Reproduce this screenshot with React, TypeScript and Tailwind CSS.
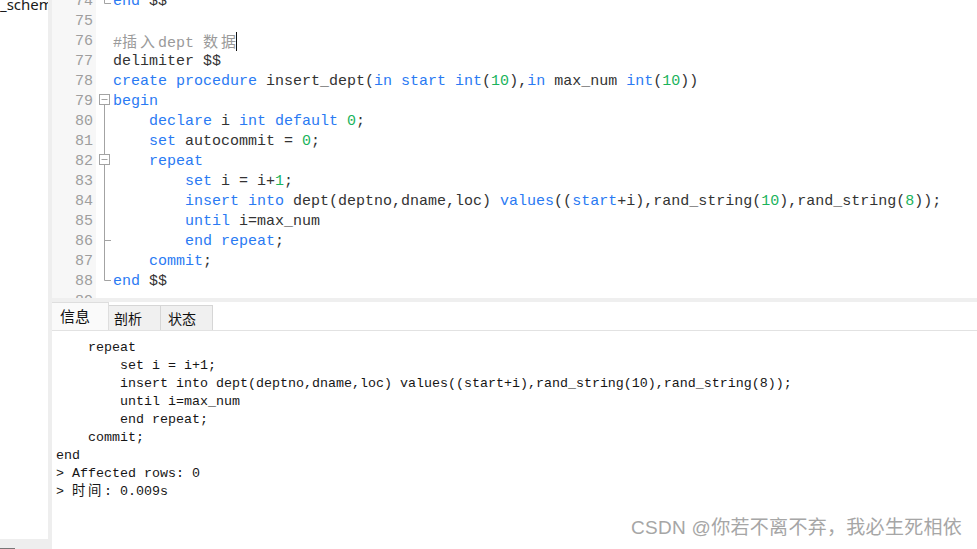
import React from "react";

type Seg = [string, "k" | "n" | "t" | "c"];

const K = (s: string): Seg => [s, "k"];
const N = (s: string): Seg => [s, "n"];
const T = (s: string): Seg => [s, "t"];

const lines: { no: number; segs: Seg[]; cursor?: boolean }[] = [
  { no: 74, segs: [K("end"), T(" $$")] },
  { no: 75, segs: [] },
  { no: 76, segs: [], cursor: true },
  { no: 77, segs: [T("delimiter $$")] },
  {
    no: 78,
    segs: [
      K("create procedure"),
      T(" insert_dept("),
      K("in start int"),
      T("("),
      N("10"),
      T("),"),
      K("in"),
      T(" max_num "),
      K("int"),
      T("("),
      N("10"),
      T("))"),
    ],
  },
  { no: 79, segs: [K("begin")] },
  { no: 80, segs: [T("    "), K("declare"), T(" i "), K("int default"), T(" "), N("0"), T(";")] },
  { no: 81, segs: [T("    "), K("set"), T(" autocommit = "), N("0"), T(";")] },
  { no: 82, segs: [T("    "), K("repeat")] },
  { no: 83, segs: [T("        "), K("set"), T(" i = i+"), N("1"), T(";")] },
  {
    no: 84,
    segs: [
      T("        "),
      K("insert into"),
      T(" dept(deptno,dname,loc) "),
      K("values"),
      T("(("),
      K("start"),
      T("+i),rand_string("),
      N("10"),
      T("),rand_string("),
      N("8"),
      T("));"),
    ],
  },
  { no: 85, segs: [T("        "), K("until"), T(" i=max_num")] },
  { no: 86, segs: [T("        "), K("end repeat"), T(";")] },
  { no: 87, segs: [T("    "), K("commit"), T(";")] },
  { no: 88, segs: [K("end"), T(" $$")] },
  { no: 89, segs: [] },
];

const colorOf: Record<string, string> = {
  k: "text-[#2a7af3]",
  n: "text-[#1bb35c]",
  t: "text-[#333333]",
  c: "text-[#9a9a9a]",
};

const mono = "font-['Liberation_Mono','Noto_Sans_CJK_SC',monospace]";

function FoldMarks() {
  const s = "#a3a3a3";
  return (
    <svg width="17" height="298" viewBox="96 0 17 298" className="absolute left-0 top-0">
      <path d={`M104.5 0 V3.5 H111`} stroke={s} fill="none" />
      <rect x="99.5" y="94.5" width="10" height="10" stroke={s} fill="#fff" />
      <path d="M101.5 99.5 H107.5" stroke={s} />
      <path d="M104.5 104.5 V154.5" stroke={s} />
      <rect x="99.5" y="154.5" width="10" height="10" stroke={s} fill="#fff" />
      <path d="M101.5 159.5 H107.5" stroke={s} />
      <path d="M104.5 164.5 V280.5 H111" stroke={s} fill="none" />
      <path d="M104.5 240.5 H111" stroke={s} />
    </svg>
  );
}

const outLines: React.ReactNode[] = [
  "    repeat",
  "        set i = i+1;",
  "        insert into dept(deptno,dname,loc) values((start+i),rand_string(10),rand_string(8));",
  "        until i=max_num",
  "        end repeat;",
  "    commit;",
  "end",
  "> Affected rows: 0",
  <>
    {"> "}
    <span className="tracking-[2.67px]">时间</span>
    {": 0.009s"}
  </>,
];

export default function App() {
  return (
    <div className="relative flex h-[549px] w-[977px] overflow-hidden bg-white">
      {/* left sidebar */}
      <div className="flex h-full w-[52px] shrink-0 flex-col bg-[#eeeeee]">
        <div className="h-[539px] w-[48px] overflow-hidden bg-white">
          <div className="mt-[-6px] whitespace-nowrap font-['Noto_Sans',sans-serif] text-[15px] leading-[20px] text-[#1a1a1a]">
            _schema
          </div>
        </div>
        <div className="flex-1" />
        <div className="h-[1px] w-[15px] bg-[#777777]" />
      </div>

      {/* main */}
      <div className="flex min-w-0 flex-1 flex-col">
        {/* editor */}
        <div className="flex h-[298px] shrink-0 overflow-hidden">
          <div className={`w-[44px] shrink-0 bg-[#f7f7f7] ${mono} text-[15px] leading-[20px] text-[#9e9e9e]`}>
            <div className="mt-[-8px]">
              {lines.map((l) => (
                <div key={l.no} className="h-[20px] pr-[3px] text-right">
                  {l.no}
                </div>
              ))}
            </div>
          </div>
          <div className="relative w-[17px] shrink-0">
            <FoldMarks />
          </div>
          <div className={`flex-1 ${mono} text-[15px] leading-[20px]`}>
            <div className="mt-[-8px]">
              {lines.map((l) => (
                <div key={l.no} className="h-[20px] whitespace-pre">
                  {l.no === 76 ? (
                    <span className="text-[#9a9a9a]">
                      #<span className="tracking-[3px]">插入</span>dept <span className="tracking-[3px]">数据</span>
                      <span className="ml-[-3px] inline-block h-[19px] w-0 border-l border-[#111] align-[-4px]" />
                    </span>
                  ) : (
                    l.segs.map((sg, i) => (
                      <span key={i} className={colorOf[sg[1]]}>
                        {sg[0]}
                      </span>
                    ))
                  )}
                </div>
              ))}
            </div>
          </div>
        </div>

        {/* separator */}
        <div className="h-[4px] shrink-0 bg-[#efefef]" />

        {/* tabs */}
        <div className="flex h-[29px] shrink-0 items-end border-b border-[#e2e2e2] font-['Noto_Sans_CJK_SC',sans-serif] text-[14px] text-[#111]">
          <div className="flex h-[28px] w-[57px] items-center border-r border-t border-[#dedede] bg-[#fafafa] pl-[8px] text-[15px]">
            信息
          </div>
          <div className="flex h-[25px] w-[52px] items-center border-r border-t border-[#d6d6d6] bg-[#f0f0f0] pl-[5px]">
            剖析
          </div>
          <div className="flex h-[25px] w-[52px] items-center border-r border-t border-[#d6d6d6] bg-[#f0f0f0] pl-[7px]">
            状态
          </div>
        </div>

        {/* output */}
        <div className={`flex-1 pl-[4px] pt-[8px] ${mono} text-[13.33px] leading-[18px] text-[#161616]`}>
          {outLines.map((o, i) => (
            <div key={i} className="h-[18px] whitespace-pre">
              {o}
            </div>
          ))}
        </div>
      </div>

      {/* watermark */}
      <div className="absolute left-[631px] top-[515px] whitespace-nowrap font-['Liberation_Sans','Noto_Sans_CJK_SC',sans-serif] text-[19px] leading-[26px] tracking-[0.3px] text-[#a6a6a6]">
        CSDN @你若不离不弃，我必生死相依
      </div>
    </div>
  );
}
